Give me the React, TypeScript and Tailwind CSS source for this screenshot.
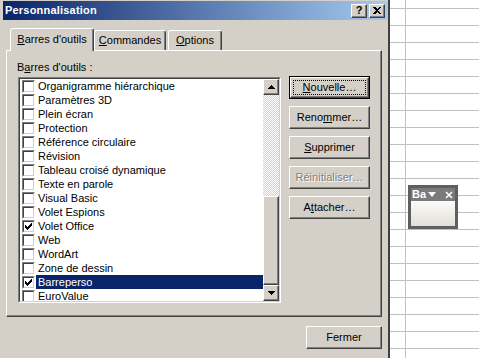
import React from "react";

const raised =
  "bg-[#d4d0c8] border border-t-white border-l-white border-r-[#404040] border-b-[#404040] shadow-[inset_-1px_-1px_#808080]";

const toolbars = [
  { label: "Organigramme hiérarchique", checked: false },
  { label: "Paramètres 3D", checked: false },
  { label: "Plein écran", checked: false },
  { label: "Protection", checked: false },
  { label: "Référence circulaire", checked: false },
  { label: "Révision", checked: false },
  { label: "Tableau croisé dynamique", checked: false },
  { label: "Texte en parole", checked: false },
  { label: "Visual Basic", checked: false },
  { label: "Volet Espions", checked: false },
  { label: "Volet Office", checked: true },
  { label: "Web", checked: false },
  { label: "WordArt", checked: false },
  { label: "Zone de dessin", checked: false },
  { label: "Barreperso", checked: true, selected: true },
  { label: "EuroValue", checked: false },
];

function Check() {
  return (
    <svg width="7" height="7" viewBox="0 0 7 7" shapeRendering="crispEdges">
      <path d="M0 2h1v3h-1zM1 3h1v3h-1zM2 4h1v3h-1zM3 3h1v3h-1zM4 2h1v3h-1zM5 1h1v3h-1zM6 0h1v3h-1z" fill="#000" />
    </svg>
  );
}

function Checkbox({ checked }: { checked: boolean }) {
  return (
    <div className="w-[13px] h-[13px] shrink-0 border border-t-[#808080] border-l-[#808080] border-r-white border-b-white">
      <div className="w-full h-full bg-white border border-t-[#404040] border-l-[#404040] border-r-[#d4d0c8] border-b-[#d4d0c8] flex items-center justify-center">
        {checked && <Check />}
      </div>
    </div>
  );
}

function Arrow({ down }: { down?: boolean }) {
  return (
    <svg width="7" height="4" viewBox="0 0 7 4" shapeRendering="crispEdges">
      <path d={down ? "M0 0h7l-3.5 4z" : "M0 4h7l-3.5-4z"} fill="#000" />
    </svg>
  );
}

function DlgButton({
  children,
  disabled,
  isDefault,
}: {
  children: React.ReactNode;
  disabled?: boolean;
  isDefault?: boolean;
}) {
  if (isDefault) {
    return (
      <div className="w-[81px] h-[23px] border border-black">
        <div className={`relative h-full flex items-center justify-center ${raised}`}>
          <span className="absolute inset-[2px] border border-dotted border-black" />
          <span>{children}</span>
        </div>
      </div>
    );
  }
  return (
    <div
      className={`w-[81px] h-[23px] flex items-center justify-center ${raised} ${
        disabled ? "text-[#808080] [text-shadow:1px_1px_0_#fff]" : ""
      }`}
    >
      {children}
    </div>
  );
}

export default function App() {
  return (
    <div className="w-[479px] h-[358px] overflow-hidden flex font-['Liberation_Sans',Arial,sans-serif] text-[11px] leading-[13px] text-black bg-white">
      {/* Dialog */}
      <div className="w-[390px] h-full shrink-0 bg-[#d4d0c8] pl-[3px] border-r-2 border-r-[#404040] flex flex-col">
        {/* Title bar */}
        <div className="mt-[1px] h-[19px] flex items-center pl-[2px] pr-[3px] bg-[linear-gradient(90deg,#0a246a,#a6caf0)]">
          <span className="font-bold text-white tracking-[0.2px]">Personnalisation</span>
          <div className="ml-auto flex gap-[2px]">
            <div className={`w-[16px] h-[14px] flex items-center justify-center font-bold text-[11px] leading-none ${raised}`}>
              ?
            </div>
            <div className={`w-[16px] h-[14px] flex items-center justify-center ${raised}`}>
              <svg width="8" height="7" viewBox="0 0 8 7" shapeRendering="crispEdges">
                <path d="M0 0h2l2 2 2-2h2l-3 3.5 3 3.5h-2l-2-2-2 2h-2l3-3.5z" fill="#000" />
              </svg>
            </div>
          </div>
        </div>

        {/* Tabs */}
        <div className="mt-[8px] ml-[3px] h-[22px] flex items-end">
          <div className="relative z-10 ml-[4px] w-[84px] h-[23px] -mb-[1px] bg-[#d4d0c8] rounded-t-[3px] border-t border-l border-white border-r border-r-[#404040] shadow-[inset_-1px_0_#808080] flex items-center justify-center pb-[1px]">
            <span>
              <span className="underline">B</span>arres d'outils
            </span>
          </div>
          <div className="w-[72px] h-[20px] rounded-t-[3px] border-t border-l border-white border-r border-r-[#404040] shadow-[inset_-1px_0_#808080] flex items-center justify-center">
            <span>
              <span className="underline">C</span>ommandes
            </span>
          </div>
          <div className="ml-[2px] w-[54px] h-[20px] rounded-t-[3px] border-t border-l border-white border-r border-r-[#404040] shadow-[inset_-1px_0_#808080] flex items-center justify-center">
            <span>
              <span className="underline">O</span>ptions
            </span>
          </div>
        </div>

        {/* Panel */}
        <div className="ml-[3px] mr-[6px] h-[267px] border border-t-white border-l-white border-r-[#404040] border-b-[#404040] shadow-[inset_-1px_-1px_#808080] flex pl-[11px]">
          <div className="flex flex-col pt-[10px]">
            <div className="-ml-[1px]">
              B<span className="underline">a</span>rres d'outils :
            </div>
            <div className="mt-[3px] w-[263px] h-[226px] border border-t-[#808080] border-l-[#808080] border-r-white border-b-white">
              <div className="w-full h-full flex border border-t-[#404040] border-l-[#404040] border-r-[#d4d0c8] border-b-[#d4d0c8] bg-white">
                <div className="flex-1 overflow-hidden">
                  {toolbars.map((t) => (
                    <div key={t.label} className="h-[14px] flex items-center pl-[2px]">
                      <Checkbox checked={t.checked} />
                      <div
                        className={`ml-[1px] flex-1 h-full flex items-center pl-[2px] whitespace-nowrap ${
                          t.selected ? "bg-[#0a246a] text-white" : ""
                        }`}
                      >
                        {t.label}
                      </div>
                    </div>
                  ))}
                </div>
                {/* Scrollbar */}
                <div className="w-[16px] flex flex-col">
                  <div className={`h-[16px] shrink-0 flex items-center justify-center ${raised}`}>
                    <Arrow />
                  </div>
                  <div className="h-[101px] shrink-0 bg-[repeating-conic-gradient(#d4d0c8_0_25%,#ffffff_0_50%)] bg-[length:2px_2px]" />
                  <div className={`flex-1 ${raised}`} />
                  <div className={`h-[16px] shrink-0 flex items-center justify-center ${raised}`}>
                    <Arrow down />
                  </div>
                </div>
              </div>
            </div>
          </div>

          <div className="ml-[8px] pt-[25px] flex flex-col gap-[7px]">
            <DlgButton isDefault>
              <span className="underline">N</span>ouvelle…
            </DlgButton>
            <DlgButton>
              Reno<span className="underline">m</span>mer…
            </DlgButton>
            <DlgButton>
              <span className="underline">S</span>upprimer
            </DlgButton>
            <DlgButton disabled>Réinitialiser…</DlgButton>
            <DlgButton>
              A<span className="underline">t</span>tacher…
            </DlgButton>
          </div>
        </div>

        {/* Footer */}
        <div className="mr-[6px] mt-[9px] flex justify-end">
          <div className={`w-[76px] h-[23px] flex items-center justify-center ${raised}`}>Fermer</div>
        </div>
      </div>

      {/* Worksheet behind */}
      <div className="relative flex-1 h-full bg-white">
        <div className="h-[9px] flex border-b border-[#c0c0c0]">
          <div className="w-[16px] border-r border-[#c0c0c0]" />
        </div>
        {Array.from({ length: 21 }).map((_, i) => (
          <div key={i} className="h-[17px] flex border-b border-[#c0c0c0]">
            <div className="w-[16px] border-r border-[#c0c0c0]" />
          </div>
        ))}

        {/* Floating toolbar */}
        <div className="absolute left-[18px] top-[185px] w-[50px] h-[44px] border-[3px] border-[#5f5f5f] bg-[#7b7b7b] flex flex-col">
          <div className="h-[13px] flex items-center pl-[1px] pr-[2px] text-white font-bold">
            <span>Ba</span>
            <svg className="ml-[2px]" width="8" height="5" viewBox="0 0 8 5">
              <path d="M0 0h8l-4 5z" fill="#fff" />
            </svg>
            <svg className="ml-auto" width="8" height="8" viewBox="0 0 8 8">
              <path d="M1 1l6 6M7 1l-6 6" stroke="#fff" strokeWidth="1.6" />
            </svg>
          </div>
          <div className="flex-1 bg-[linear-gradient(180deg,#fbfbf9,#e3e0d8)]" />
        </div>
      </div>
    </div>
  );
}
